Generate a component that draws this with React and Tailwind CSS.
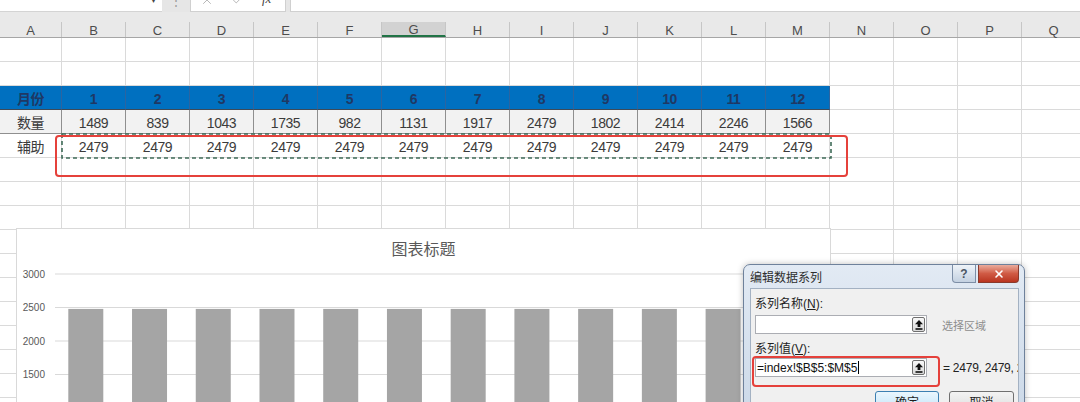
import React from 'react';
import { X, Check } from 'lucide-react';

const COLS = ['A','B','C','D','E','F','G','H','I','J','K','L','M','N','O','P','Q'];
const ROW3 = ['月份','1','2','3','4','5','6','7','8','9','10','11','12'];
const ROW4 = ['数量','1489','839','1043','1735','982','1131','1917','2479','1802','2414','2246','1566'];
const ROW5 = ['辅助','2479','2479','2479','2479','2479','2479','2479','2479','2479','2479','2479','2479'];

function cellClass(r, c) {
  const w = c === 0 ? 'w-[62px]' : 'w-[64px]';
  if (r === 2 && c <= 12) {
    return `${w} shrink-0 h-full pt-[3px] flex items-center justify-center bg-[#0070c0] border-r border-b border-r-[#2c64a0] border-b-[#3f4a57] font-bold text-[#1f3864]`;
  }
  if (r === 3 && c <= 12) {
    return `${w} shrink-0 h-full pt-[3px] flex items-center justify-center bg-[#f2f2f2] border-r border-b border-r-[#8f8f8f] border-b-[#8f8f8f] text-[#3b3b3b]`;
  }
  return `${w} shrink-0 h-full pt-[3px] flex items-center justify-center border-r border-b border-[#dadada] text-[#3b3b3b]`;
}

function cellText(r, c) {
  if (r === 2) return ROW3[c] ?? '';
  if (r === 3) return ROW4[c] ?? '';
  if (r === 4) return ROW5[c] ?? '';
  return '';
}

function UpBtn() {
  return (
    <div className="w-[13px] h-[15px] mr-[1px] border border-[#6f6f6f] rounded-[2px] bg-gradient-to-b from-[#f8f8f8] to-[#d9d9d9] flex items-center justify-center">
      <svg width="8" height="10" viewBox="0 0 8 10">
        <path d="M4 0 L8 4.2 H5.4 V7 H2.6 V4.2 H0 Z" fill="#111" />
        <rect x="0.5" y="8.2" width="7" height="1.6" fill="#111" />
      </svg>
    </div>
  );
}

export default function App() {
  const rows = Array.from({ length: 16 }, (_, i) => i);
  const bars = Array.from({ length: 12 }, (_, i) => i);
  const grid = [
    { v: '3000', y: 15 },
    { v: '2500', y: 48.5 },
    { v: '2000', y: 82 },
    { v: '1500', y: 115.5 },
    { v: '1000', y: 149 },
  ];
  const barTop = 15 + (521 / 500) * 33.5;

  return (
    <div className="relative w-[1080px] h-[402px] overflow-hidden bg-white font-['Liberation_Sans','Noto_Sans_CJK_SC',sans-serif]">
      {/* formula bar */}
      <div className="flex h-[12px] overflow-hidden bg-[#e6e6e6]">
        <div className="w-[162px] shrink-0 bg-white border-b border-[#d4d4d4] flex justify-end pr-[6px]">
          <span className="-mt-[7px] text-[10px] leading-[14px] text-[#444]">▾</span>
        </div>
        <div className="w-[28px] shrink-0 flex justify-center">
          <span className="-mt-[6px] text-[12px] leading-[14px] text-[#9a9a9a]">⋮</span>
        </div>
        <div className="w-[96px] shrink-0 bg-white border-x border-b border-[#d0d0d0] flex items-start pl-[9px] gap-[17px]">
          <X size={14} strokeWidth={1.4} className="-mt-[7px] text-[#a8a8a8]" />
          <Check size={14} strokeWidth={1.4} className="-mt-[7px] text-[#a8a8a8]" />
          <span className="-mt-[8px] font-['Liberation_Serif',serif] italic text-[13px] leading-[14px] text-[#444]">fx</span>
        </div>
        <div className="w-[4px] shrink-0" />
        <div className="flex-1 bg-white border-l border-b border-[#d0d0d0]" />
      </div>
      <div className="h-[10px] bg-[#e9e9e9]" />
      {/* column headers */}
      <div className="flex h-[16px] bg-[#e9e9e9] border-b border-[#a6a6a6]">
        {COLS.map((c, i) => (
          <div
            key={c}
            className={
              c === 'G'
                ? 'w-[64px] shrink-0 h-full pt-[2px] flex items-center justify-center border-r border-[#c6c6c6] bg-[#d2d2d2] border-b-2 border-b-[#217346] text-[13px] leading-[14px] text-[#4d4d4d]'
                : i === 0
                ? 'w-[62px] shrink-0 h-full pt-[2px] flex items-center justify-center border-r border-[#c6c6c6] text-[13px] leading-[14px] text-[#4d4d4d]'
                : 'w-[64px] shrink-0 h-full pt-[2px] flex items-center justify-center border-r border-[#c6c6c6] text-[13px] leading-[14px] text-[#4d4d4d]'
            }
          >
            {c}
          </div>
        ))}
      </div>
      {/* sheet rows */}
      {rows.map((r) => (
        <div key={r} className="flex h-[24px] text-[14px] tracking-[-0.03em]">
          {COLS.map((c, ci) => (
            <div key={c} className={cellClass(r, ci)}>
              {cellText(r, ci)}
            </div>
          ))}
        </div>
      ))}

      {/* copy marquee */}
      <svg className="absolute left-[61px] top-[133px]" width="771" height="26">
        <rect x="1" y="1" width="769" height="24" fill="none" stroke="#3f6b58" strokeWidth="1.6" strokeDasharray="4 3" />
      </svg>
      {/* red annotation */}
      <div className="absolute left-[55px] top-[135px] w-[793px] h-[42px] border-2 border-[#e5413b] rounded-[4px]" />

      {/* chart */}
      <div className="absolute left-[16px] top-[228px] w-[815px] h-[190px] bg-white border border-[#d9d9d9]">
        <div className="pt-[8px] text-center text-[16px] leading-[22px] text-[#595959] font-['Noto_Sans_CJK_SC',sans-serif]">
          图表标题
        </div>
        <svg width="813" height="150" className="block">
          {grid.map((g) => (
            <g key={g.v}>
              <line x1="38" x2="804" y1={g.y} y2={g.y} stroke="#d9d9d9" strokeWidth="1" />
              <text x="28" y={g.y + 3.5} textAnchor="end" fontSize="10" fill="#595959" fontFamily="Liberation Sans, sans-serif">
                {g.v}
              </text>
            </g>
          ))}
          {bars.map((i) => (
            <rect key={i} x={51.3 + 63.73 * i} y={barTop} width="35" height="200" fill="#a5a5a5" />
          ))}
        </svg>
      </div>

      {/* dialog */}
      <div className="absolute left-[743px] top-[264px] w-[282px] h-[150px] rounded-t-[7px] border border-[#6e819b] bg-gradient-to-b from-[#e2eaf4] to-[#ccd9e8] pl-[6px] pr-[5px] flex flex-col shadow-[0_0_6px_rgba(0,0,0,0.25)]">
        <div className="h-[23px] shrink-0 flex items-start justify-between">
          <span className="mt-[5px] text-[12px] leading-[14px] text-[#2e2e2e] font-['Noto_Sans_CJK_SC',sans-serif]">编辑数据系列</span>
          <div className="flex gap-[2px]">
            <div className="w-[24px] h-[18px] rounded-bl-[4px] border border-t-0 border-[#7d8ea6] bg-gradient-to-b from-[#eef3f8] to-[#c4d1e1] flex items-center justify-center text-[12px] leading-[12px] font-bold text-[#4b5563]">
              ?
            </div>
            <div className="w-[41px] h-[18px] rounded-br-[4px] border border-t-0 border-[#8a3a2c] bg-gradient-to-b from-[#e9ab9c] via-[#d05b45] to-[#b9341f] flex items-center justify-center">
              <X size={12} strokeWidth={3.2} className="text-white" />
            </div>
          </div>
        </div>
        <div className="flex-1 bg-[#f0f0f0] border border-[#a3b1c2] px-[4px] overflow-hidden text-[12px] leading-[14px] text-[#1e1e1e]">
          <div className="mt-[8px]">
            系列名称(<span className="underline">N</span>):
          </div>
          <div className="mt-[4px] flex items-center">
            <div className="w-[172px] h-[19px] shrink-0 border border-[#abadb3] bg-white flex items-center justify-end">
              <UpBtn />
            </div>
            <span className="ml-[15px] text-[11px] text-[#8d8d8d] whitespace-nowrap font-['Noto_Sans_CJK_SC',sans-serif]">选择区域</span>
          </div>
          <div className="mt-[8px]">
            系列值(<span className="underline">V</span>):
          </div>
          <div className="mt-[2px] flex items-center relative">
            <div className="w-[172px] h-[19px] shrink-0 border border-[#abadb3] bg-white flex items-center justify-between pl-[1px]">
              <span className="flex items-center whitespace-nowrap text-[12px] text-[#111]">
                =index!$B$5:$M$5<span className="w-px h-[13px] bg-black ml-px" />
              </span>
              <UpBtn />
            </div>
            <span className="ml-[16px] whitespace-nowrap text-[12px] tracking-[-0.02em] text-[#222]">= 2479, 2479, 2479</span>
            <div className="absolute -left-[3px] -top-[2px] w-[188px] h-[31px] border-2 border-[#e5413b] rounded-[4px]" />
          </div>
          <div className="mt-[14px] flex justify-end gap-[10px]">
            <div className="w-[64px] h-[22px] rounded-[3px] border border-[#3c7fb1] bg-gradient-to-b from-[#eaf6fd] to-[#c0e3f8] flex items-center justify-center font-['Noto_Sans_CJK_SC',sans-serif]">
              确定
            </div>
            <div className="w-[65px] h-[22px] rounded-[3px] border border-[#707070] bg-gradient-to-b from-[#f3f3f3] to-[#dcdcdc] flex items-center justify-center font-['Noto_Sans_CJK_SC',sans-serif]">
              取消
            </div>
          </div>
        </div>
      </div>
    </div>
  );
}
